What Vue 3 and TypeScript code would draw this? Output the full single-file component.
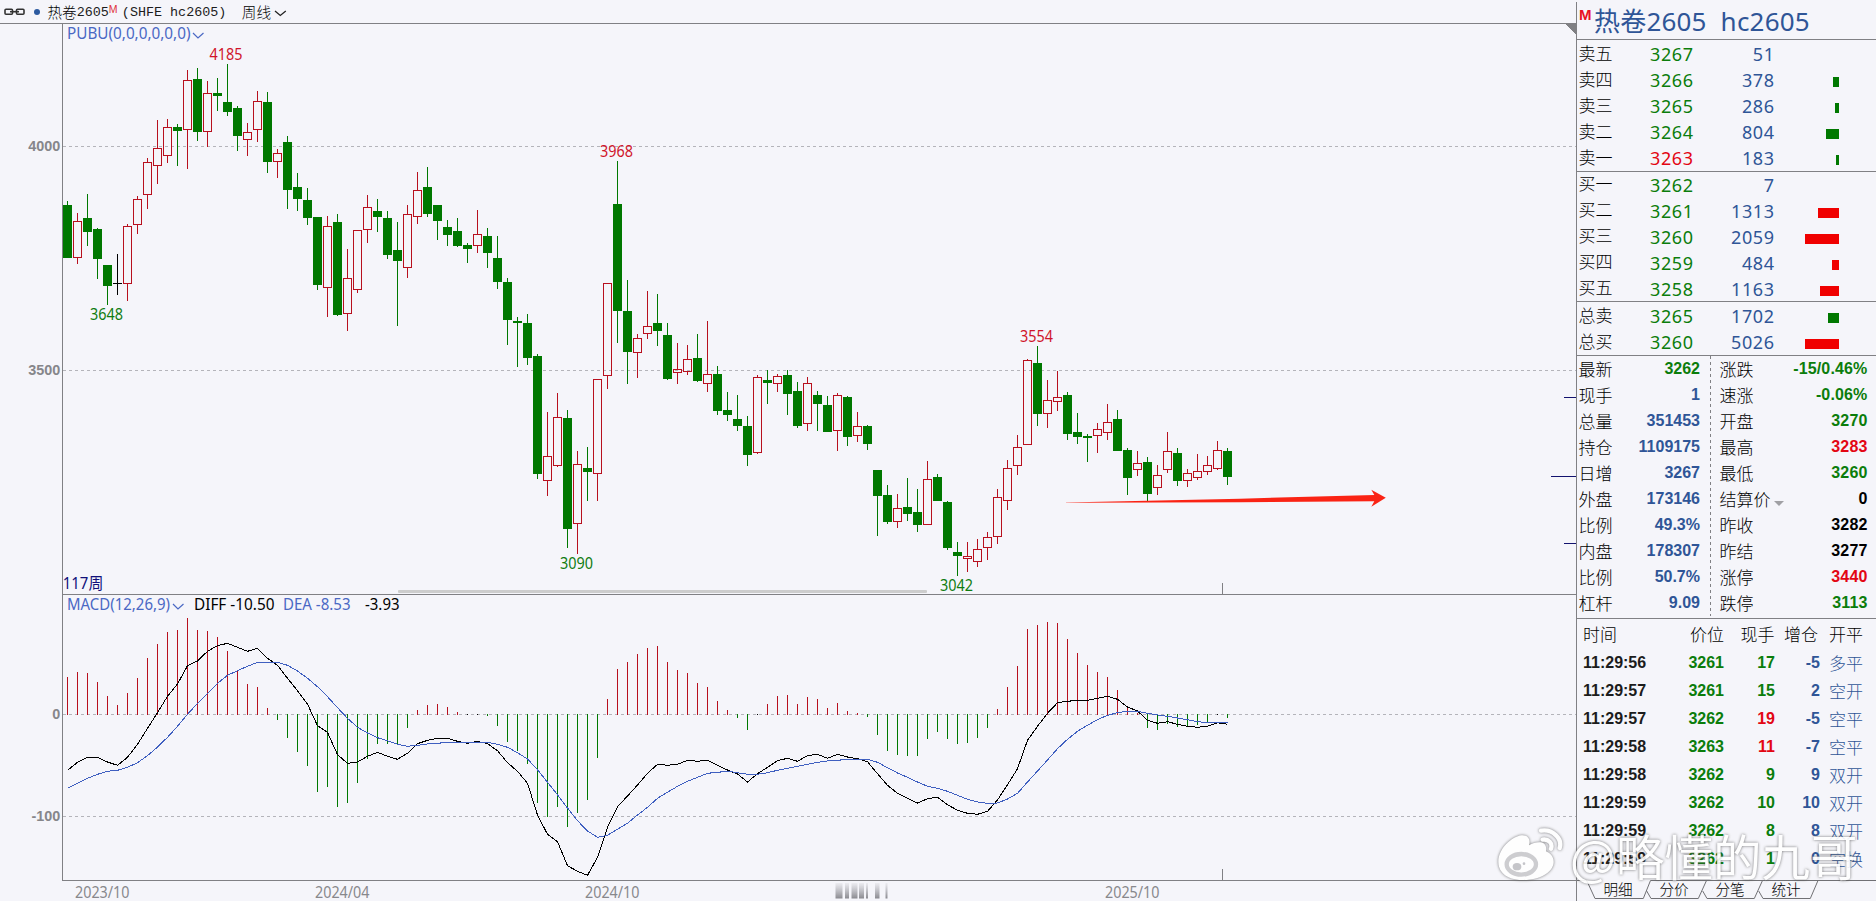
<script setup lang="ts">
type Tone = 'up' | 'down' | 'info' | 'plain'
type Candle = [string, number, number, number, number]

/* kind, high, body top, body bottom, low (chart pixels) */
const candles: Candle[] = [
  ['g', 201, 205, 258, 258], ['r', 213, 221, 258, 264], ['g', 194, 218, 232, 246], ['g', 228, 229, 259, 279],
  ['g', 265, 265, 286, 305], ['k', 254, 283, 284, 295], ['r', 224, 226, 284, 301], ['r', 196, 199, 225, 234],
  ['r', 158, 162, 195, 209], ['r', 120, 148, 166, 184], ['r', 119, 127, 156, 163], ['g', 124, 127, 131, 166],
  ['r', 70, 80, 130, 169], ['g', 68, 79, 132, 141], ['r', 81, 93, 132, 147], ['g', 78, 93, 96, 111],
  ['g', 64, 102, 112, 116], ['g', 106, 108, 136, 151], ['r', 123, 132, 140, 156], ['r', 91, 101, 130, 142],
  ['g', 92, 102, 162, 173], ['r', 149, 153, 162, 178], ['g', 136, 142, 190, 209], ['g', 173, 187, 199, 211],
  ['g', 188, 200, 218, 225], ['g', 217, 217, 285, 290], ['r', 216, 226, 288, 317], ['g', 214, 222, 315, 316],
  ['r', 249, 278, 314, 331], ['r', 230, 230, 290, 293], ['r', 195, 207, 230, 243], ['g', 199, 211, 217, 232],
  ['g', 211, 218, 255, 259], ['g', 222, 250, 261, 326], ['r', 205, 214, 268, 278], ['r', 172, 190, 217, 224],
  ['g', 167, 187, 214, 217], ['g', 205, 205, 221, 240], ['g', 220, 227, 235, 246], ['g', 218, 231, 246, 247],
  ['g', 243, 245, 249, 263], ['r', 210, 234, 246, 253], ['g', 228, 236, 253, 268], ['g', 236, 258, 282, 289],
  ['g', 278, 282, 320, 345], ['g', 317, 321, 323, 367], ['g', 314, 323, 358, 365], ['g', 354, 356, 474, 479],
  ['r', 412, 456, 481, 496], ['r', 393, 417, 466, 467], ['g', 410, 418, 529, 548], ['r', 451, 464, 524, 554],
  ['g', 447, 468, 472, 501], ['r', 379, 379, 474, 501], ['r', 283, 283, 376, 389], ['g', 161, 204, 311, 343],
  ['g', 280, 311, 352, 384], ['r', 334, 338, 353, 378], ['r', 291, 326, 334, 339], ['g', 294, 323, 331, 346],
  ['g', 323, 335, 379, 380], ['r', 343, 369, 373, 384], ['r', 345, 359, 372, 375], ['g', 334, 358, 381, 382],
  ['r', 321, 374, 384, 392], ['g', 366, 374, 411, 415], ['g', 392, 410, 415, 421], ['g', 395, 419, 426, 431],
  ['g', 416, 426, 455, 466], ['r', 375, 377, 453, 454], ['g', 370, 380, 383, 404], ['r', 374, 376, 384, 392],
  ['g', 370, 375, 394, 415], ['g', 382, 391, 426, 428], ['r', 377, 383, 424, 431], ['g', 391, 395, 404, 431],
  ['g', 396, 405, 432, 432], ['r', 393, 395, 431, 451], ['g', 396, 397, 437, 446], ['r', 412, 426, 436, 442],
  ['g', 425, 426, 444, 450], ['g', 470, 470, 496, 536], ['g', 485, 495, 522, 524], ['r', 494, 508, 522, 528],
  ['g', 478, 507, 514, 521], ['g', 489, 512, 525, 532], ['r', 461, 479, 525, 525], ['g', 474, 477, 501, 501],
  ['g', 501, 502, 548, 550], ['g', 542, 552, 556, 576], ['r', 542, 556, 559, 572], ['r', 539, 549, 562, 567],
  ['r', 532, 537, 548, 560], ['r', 489, 497, 537, 544], ['r', 460, 468, 501, 510], ['r', 435, 447, 466, 475],
  ['r', 359, 360, 445, 445], ['g', 346, 363, 414, 426], ['r', 380, 400, 414, 428], ['r', 371, 397, 402, 411],
  ['g', 392, 395, 434, 440], ['g', 413, 432, 437, 444], ['g', 434, 436, 438, 462], ['r', 423, 429, 436, 453],
  ['r', 404, 422, 433, 440], ['g', 410, 419, 451, 451], ['g', 448, 450, 478, 495], ['r', 451, 463, 470, 476],
  ['g', 457, 462, 494, 502], ['r', 465, 475, 488, 495], ['r', 432, 451, 470, 473], ['g', 448, 453, 481, 486],
  ['r', 469, 473, 481, 487], ['r', 454, 471, 478, 480], ['r', 456, 465, 472, 475], ['r', 441, 450, 469, 470],
  ['g', 448, 451, 477, 485],
]

/* MACD series are stored in thirds of a pixel below y = 570 */
const hist = [
  321, 306, 309, 336, 378, 405, 369, 324, 264, 222, 186, 180, 144, 180, 183, 201, 243, 303, 342, 351, 414, 449, 503, 545,
  587, 665, 650, 710, 698, 638, 566, 521, 521, 521, 473, 420, 405, 402, 411, 426, 434, 434, 437, 467, 515, 542, 581, 698,
  740, 710, 770, 728, 689, 563, 387, 297, 276, 252, 234, 228, 276, 300, 309, 339, 351, 393, 420, 443, 479, 434, 402, 378,
  375, 402, 381, 387, 414, 399, 423, 430, 440, 494, 542, 554, 557, 557, 506, 485, 506, 521, 518, 503, 473, 417, 351, 288,
  177, 165, 156, 159, 207, 249, 285, 306, 321, 360, 411, 429, 473, 479, 461, 470, 467, 464, 458, 434, 443,
]
const diff = [
  601, 577, 562, 562, 576, 586, 562, 523, 475, 428, 379, 342, 287, 273, 244, 227, 220, 232, 244, 235, 265, 286, 325, 362,
  402, 467, 487, 554, 580, 576, 559, 547, 559, 568, 550, 521, 511, 505, 505, 514, 520, 514, 521, 542, 578, 604, 640, 735,
  793, 815, 887, 904, 916, 862, 772, 710, 678, 645, 610, 583, 586, 583, 571, 574, 571, 586, 600, 612, 636, 611, 592, 572,
  565, 574, 557, 553, 565, 553, 561, 566, 575, 611, 646, 670, 685, 699, 686, 682, 704, 721, 730, 733, 724, 690, 644, 596,
  511, 469, 430, 398, 394, 391, 391, 385, 379, 388, 411, 423, 451, 460, 455, 463, 469, 472, 469, 458, 463,
]
const dea = [
  655, 640, 625, 613, 604, 601, 592, 578, 557, 531, 502, 469, 433, 400, 370, 340, 316, 302, 289, 277, 277, 277, 286, 303,
  325, 350, 380, 413, 445, 472, 489, 503, 512, 523, 529, 526, 522, 520, 517, 517, 517, 517, 517, 523, 532, 548, 567, 599,
  637, 674, 714, 752, 783, 802, 796, 778, 760, 735, 712, 685, 667, 649, 634, 622, 610, 607, 604, 608, 613, 613, 608, 601,
  595, 589, 583, 577, 573, 571, 568, 568, 568, 577, 593, 609, 622, 636, 649, 655, 664, 676, 688, 696, 700, 699, 687, 670,
  636, 603, 570, 536, 508, 484, 466, 449, 436, 428, 424, 424, 430, 435, 439, 444, 449, 455, 458, 458, 458,
]
const cx = (i: number) => 67 + i * 10
const macdY = (v: number) => 570 + v / 3
const points = (s: number[]) => s.map((v, i) => `${cx(i) + 0.5},${macdY(v).toFixed(1)}`).join(' ')
const bars = hist.map((v, i) => {
  const end = Math.round(macdY(v))
  return v < 433
    ? { x: cx(i), y: end, h: 715 - end, kind: 'r' }
    : { x: cx(i), y: 714, h: Math.max(1, end - 714), kind: v < 436 ? 'k' : 'g' }
})

const peaks = [
  { t: '4185', x: 209.5, y: 60, c: 'r' }, { t: '3648', x: 90, y: 320, c: 'g' },
  { t: '3968', x: 600, y: 157, c: 'r' }, { t: '3090', x: 560, y: 569, c: 'g' },
  { t: '3554', x: 1020, y: 342, c: 'r' }, { t: '3042', x: 940, y: 591, c: 'g' },
]
const dates = [
  { t: '2023/10', x: 75 }, { t: '2024/04', x: 315 }, { t: '2024/10', x: 585 }, { t: '2025/10', x: 1105 },
]
const smudges = [
  [835.5, 7], [845, 4], [851.5, 6], [859, 5], [866, 2], [875, 4.5], [885.5, 2],
]

interface Quote { label: string; price: number; tone: Tone; vol: number; bar: number }
const q = (label: string, price: number, tone: Tone, vol: number, bar: number): Quote => ({ label, price, tone, vol, bar })
const books: { side: string; rows: Quote[] }[] = [
  { side: 'sell', rows: [q('卖五', 3267, 'down', 51, 0), q('卖四', 3266, 'down', 378, 6), q('卖三', 3265, 'down', 286, 4), q('卖二', 3264, 'down', 804, 13), q('卖一', 3263, 'up', 183, 3)] },
  { side: 'buy', rows: [q('买一', 3262, 'down', 7, 0), q('买二', 3261, 'down', 1313, 21), q('买三', 3260, 'down', 2059, 34), q('买四', 3259, 'down', 484, 7), q('买五', 3258, 'down', 1163, 19)] },
  { side: 'sum', rows: [q('总卖', 3265, 'down', 1702, 11), q('总买', 3260, 'down', 5026, 34)] },
]
const barTone = (side: string, i: number) => (side === 'sell' || (side === 'sum' && i === 0) ? 'fill-down' : 'fill-up')

const stats: [string, string, Tone, string, string, Tone][] = [
  ['最新', '3262', 'down', '涨跌', '-15/0.46%', 'down'],
  ['现手', '1', 'info', '速涨', '-0.06%', 'down'],
  ['总量', '351453', 'info', '开盘', '3270', 'down'],
  ['持仓', '1109175', 'info', '最高', '3283', 'up'],
  ['日增', '3267', 'info', '最低', '3260', 'down'],
  ['外盘', '173146', 'info', '结算价', '0', 'plain'],
  ['比例', '49.3%', 'info', '昨收', '3282', 'plain'],
  ['内盘', '178307', 'info', '昨结', '3277', 'plain'],
  ['比例', '50.7%', 'info', '涨停', '3440', 'up'],
  ['杠杆', '9.09', 'info', '跌停', '3113', 'down'],
]
const ticks: [string, string, string, Tone, string, string][] = [
  ['11:29:56', '3261', '17', 'down', '-5', '多平'],
  ['11:29:57', '3261', '15', 'down', '2', '空开'],
  ['11:29:57', '3262', '19', 'up', '-5', '空平'],
  ['11:29:58', '3263', '11', 'up', '-7', '空平'],
  ['11:29:58', '3262', '9', 'down', '9', '双开'],
  ['11:29:59', '3262', '10', 'down', '10', '双开'],
  ['11:29:59', '3262', '8', 'down', '8', '双开'],
  ['11:29:59', '3262', '1', 'down', '0', '空换'],
]
const tabs = [{ t: '明细', x: 26.5 }, { t: '分价', x: 82.5 }, { t: '分笔', x: 138.5 }, { t: '统计', x: 194.5 }]
</script>

<template>
  <div class="app">
    <section class="main">
      <header class="topbar">
        <svg class="chain" width="22" height="8" viewBox="0 0 22 8">
          <rect x="1" y="1.2" width="7.5" height="5" rx="1" />
          <rect x="12.5" y="1.2" width="7.5" height="5" rx="1" />
          <path d="M6 3.7h9" />
        </svg>
        <i class="dot"></i>
        <span class="cjk">热卷</span><span class="mono">2605</span><sup>M</sup><span class="mono code">(SHFE hc2605)</span>
        <span class="cjk period">周线</span>
        <svg class="chev" width="13" height="7" viewBox="0 0 13 7"><path d="M1 1l5.3 4.4L11.8 1" /></svg>
      </header>

      <svg class="chart" width="1576" height="878" viewBox="0 23 1576 878">
        <g class="grid">
          <line v-for="y in [146, 370, 714, 816]" :key="y" x1="63" :y1="y + 0.5" x2="1576" :y2="y + 0.5" />
        </g>
        <g class="frame">
          <path d="M0 23.5H1576M62.5 23V880.5M62 594.5H1576M62 880.5H1576M1222.5 583V594M1222.5 869V880" />
          <path class="corner" d="M1565 24H1576V35Z" />
        </g>
        <rect class="scroll" x="398" y="590" width="529" height="3" rx="1" />
        <path class="marks" d="M1564 397.5H1576M1551 476.5H1576M1564 543.5H1576" />

        <g class="candles">
          <g v-for="(c, i) in candles" :key="i" :class="c[0]">
            <template v-if="c[0] === 'r'">
              <rect class="ink" :x="cx(i)" :y="c[1]" width="1" :height="c[2] - c[1]" />
              <rect class="ink" :x="cx(i)" :y="c[3]" width="1" :height="c[4] - c[3]" />
              <rect class="hollow" :x="cx(i) - 3.5" :y="c[2] + 0.5" width="8" :height="c[3] - c[2] - 1" />
            </template>
            <template v-else>
              <rect class="ink" :x="cx(i)" :y="c[1]" width="1" :height="c[4] - c[1]" />
              <rect class="ink" :x="cx(i) - 4" :y="c[2]" width="9" :height="c[3] - c[2]" />
            </template>
          </g>
          <g v-for="(b, i) in bars" :key="'m' + i" :class="b.kind">
            <rect class="ink" :x="b.x" :y="b.y" width="1" :height="b.h" />
          </g>
          <polyline class="diff" :points="points(diff)" />
          <polyline class="dea" :points="points(dea)" />
        </g>

        <path class="arrow" d="M1066 502.4L1240 498.7L1374.3 495L1371.3 489.7L1385.8 497.7L1371.3 506.8L1374.3 501.2L1240 502.2L1066 502.8Z" />

        <g class="label">
          <text v-for="p in peaks" :key="p.t" :class="p.c" :x="p.x" :y="p.y" textLength="33" lengthAdjust="spacingAndGlyphs">{{ p.t }}</text>
          <text class="blue" x="67" y="39.3" textLength="123.5" lengthAdjust="spacingAndGlyphs">PUBU(0,0,0,0,0,0)</text>
          <text class="navy" x="62.8" y="589.3" textLength="40.5" lengthAdjust="spacingAndGlyphs">117周</text>
          <text class="blue" x="67" y="610" textLength="103" lengthAdjust="spacingAndGlyphs">MACD(12,26,9)</text>
          <text class="black" x="194" y="610" textLength="80.5" lengthAdjust="spacingAndGlyphs">DIFF -10.50</text>
          <text class="blue" x="283" y="610" textLength="67.5" lengthAdjust="spacingAndGlyphs">DEA -8.53</text>
          <text class="black" x="365" y="610" textLength="34.5" lengthAdjust="spacingAndGlyphs">-3.93</text>
          <text v-for="d in dates" :key="d.t" class="gray" :x="d.x" y="898" textLength="54.5" lengthAdjust="spacingAndGlyphs">{{ d.t }}</text>
        </g>
        <path class="drop" d="M193 33l5 5 5.5-5M173 604l5 5 5.5-5" />
        <g class="axis">
          <text x="60.3" y="151">4000</text>
          <text x="60.3" y="375">3500</text>
          <text x="60.3" y="719">0</text>
          <text x="60.3" y="821">-100</text>
        </g>
        <defs>
          <linearGradient id="fade" x1="0" y1="0" x2="0" y2="1">
            <stop offset="0" stop-color="#8a8a90" stop-opacity="0.08" />
            <stop offset="1" stop-color="#77777d" stop-opacity="0.85" />
          </linearGradient>
        </defs>
        <g class="smudge">
          <rect v-for="(s, i) in smudges" :key="'s' + i" fill="url(#fade)" :x="s[0]" y="883" :width="s[1]" height="15.5" />
        </g>
      </svg>
    </section>

    <aside class="panel">
      <h1><b>M</b><span>热卷2605&nbsp; hc2605</span></h1>
      <div v-for="bk in books" :key="bk.side" class="book" :class="bk.side">
        <div v-for="(r, i) in bk.rows" :key="r.label" class="quote">
          <span class="name">{{ r.label }}</span>
          <span class="num" :class="r.tone">{{ r.price }}</span>
          <span class="num info">{{ r.vol }}</span>
          <span class="track"><i :class="barTone(bk.side, i)" :style="{ width: r.bar + 'px' }"></i></span>
        </div>
      </div>
      <div class="stats">
        <div v-for="(s, i) in stats" :key="i" class="stat">
          <span class="name">{{ s[0] }}</span>
          <b :class="s[2]">{{ s[1] }}</b>
          <span class="name second">{{ s[3] }}<i v-if="s[3] === '结算价'" class="tri"></i></span>
          <b :class="s[5]">{{ s[4] }}</b>
        </div>
      </div>
      <div class="ticks">
        <div class="tick head">
          <span>时间</span><span>价位</span><span>现手</span><span>增仓</span><span>开平</span>
        </div>
        <div v-for="(t, i) in ticks" :key="i" class="tick">
          <b class="time">{{ t[0] }}</b><b class="down">{{ t[1] }}</b><b :class="t[3]">{{ t[2] }}</b><b class="info">{{ t[4] }}</b><span class="info">{{ t[5] }}</span>
        </div>
      </div>
      <svg class="tabs" width="299" height="21" viewBox="0 0 299 21">
        <path d="M0 .5H9.7L18 18.5H66.3L73.5 .5H299M69.7 11L74 18.5H121.3L129.5 .5M125.7 11L130 18.5H177.3L185.5 .5M181.7 11L186 18.5H233.3L241 .5" />
        <text v-for="t in tabs" :key="t.t" :x="t.x" y="14.5">{{ t.t }}</text>
      </svg>
    </aside>

    <div class="watermark">
      <svg width="68" height="58" viewBox="45 645 204 174">
        <path class="w" d="M57 770C45 725 92 680 125 676C146 675 152 690 147 706C170 692 204 690 198 724C230 738 226 772 202 789C165 818 72 822 57 770Z" />
        <ellipse class="ring" cx="124" cy="763" rx="44" ry="31" />
        <ellipse class="pupil" cx="111" cy="770" rx="13" ry="11" />
        <circle class="pupil" cx="132" cy="761" r="4" />
        <path class="wave" d="M183 662C218 656 248 686 239 714M188 689C205 686 219 700 213 716" />
      </svg>
      <span>@略懂的九哥</span>
    </div>
  </div>
</template>

<style>
html,
body {
  margin: 0;
  background: #f5f5fa;
  overflow: hidden;
}
</style>

<style scoped>
.app {
  position: relative;
  display: grid;
  grid-template-columns: 1576px 300px;
  width: 1876px;
  height: 901px;
  overflow: hidden;
  background: #f5f5fa;
  font-family: 'Noto Sans', 'Noto Sans CJK SC', sans-serif;
  color: #1c1c1c;
}
.main {
  display: flex;
  flex-direction: column;
}
.topbar {
  display: flex;
  align-items: center;
  height: 23px;
  padding-left: 4px;
  box-sizing: border-box;
  white-space: pre;
}
.chain {
  margin-top: 1px;
}
.chain rect,
.chain path {
  fill: none;
  stroke: #333;
  stroke-width: 1.6;
}
.dot {
  width: 6px;
  height: 6px;
  margin: 1px 7.5px 0 8px;
  border-radius: 50%;
  background: #2c5aa0;
}
.cjk {
  font: 300 14.6px/22px 'Noto Sans CJK SC', sans-serif;
  color: #000;
}
.mono {
  font: 13.4px/22px 'Liberation Mono', monospace;
  padding-top: 2px;
}
.topbar sup {
  width: 11px;
  margin-top: -6px;
  font: 10.5px/12px 'Liberation Sans', sans-serif;
  color: #e0303c;
  vertical-align: baseline;
}
.code {
  margin-left: 2px;
}
.period {
  margin-left: 15.5px;
}
.chev {
  margin: 3px 0 0 2.5px;
}
.chev path {
  fill: none;
  stroke: #222;
  stroke-width: 1.3;
}
.chart {
  display: block;
}
.grid line {
  stroke: #b4b4ba;
  stroke-dasharray: 3 3;
  shape-rendering: crispEdges;
}
.frame path {
  fill: none;
  stroke: #808084;
  shape-rendering: crispEdges;
}
.frame .corner {
  fill: #808084;
  stroke: none;
}
.scroll {
  fill: #cdcdcd;
}
.smudge {
  filter: blur(0.6px);
}
.marks {
  stroke: #12126e;
  shape-rendering: crispEdges;
}
.candles {
  shape-rendering: crispEdges;
}
.r .ink {
  fill: #b8101e;
}
.r .hollow {
  fill: none;
  stroke: #b8101e;
}
.g .ink {
  fill: #007800;
}
.k .ink {
  fill: #000;
}
.diff,
.dea {
  fill: none;
  stroke: #000;
  stroke-width: 1;
}
.dea {
  stroke: #3f5fc0;
}
.arrow {
  fill: #fa2314;
}
.label text {
  font-size: 16.2px;
}
.label .r {
  fill: #d0142a;
}
.label .g {
  fill: #107c10;
}
.blue {
  fill: #4a68c4;
}
.navy {
  fill: #10107a;
}
.black {
  fill: #000;
}
.gray {
  fill: #88888c;
}
.drop {
  fill: none;
  stroke: #4a68c4;
  stroke-width: 1.2;
}
.axis text {
  font: bold 14.4px 'Liberation Sans', sans-serif;
  fill: #86868a;
  text-anchor: end;
}

.panel {
  display: flex;
  flex-direction: column;
  margin-top: 2px;
  border-left: 1px solid #808084;
  background: #f5f5fa;
}
h1 {
  display: flex;
  align-items: center;
  height: 37px;
  margin: 0;
  border-bottom: 1px solid #808084;
  font-size: 26px;
  line-height: 37px;
  color: #2f5597;
  white-space: pre;
}
h1 b {
  width: 15px;
  margin: -13px 0 0 2px;
  font: bold 15px/15px 'Liberation Sans', sans-serif;
  color: #e81123;
}
h1 span {
  padding-top: 1px;
  font-weight: 400;
  letter-spacing: 0.2px;
}
.book {
  border-bottom: 1px solid #808084;
}
.sell {
  padding-top: 1px;
}
.buy {
  height: 129px;
}
.buy .quote {
  position: relative;
  top: -0.5px;
}
.sum {
  padding-top: 1px;
  height: 52px;
}
.quote {
  display: grid;
  grid-template-columns: 60px 56.5px 81px 64.5px;
  align-items: center;
  height: 26px;
}
.name,
.tick span {
  font: 300 17px/24px 'Noto Sans CJK SC', sans-serif;
}
.name {
  padding-left: 1.5px;
  margin-top: -3px;
  color: #000;
}
.head span {
  color: #000;
}
.stat .name {
  margin-top: -1px;
}
.num {
  font-size: 18px;
  line-height: 26px;
  letter-spacing: 0.55px;
  text-align: right;
}
.track {
  display: flex;
  justify-content: flex-end;
  padding-top: 4px;
}
.track i {
  height: 10px;
}
.up {
  color: #e30613;
}
.down {
  color: #0b7d0b;
}
.info {
  color: #2f5597;
}
.plain {
  color: #000;
}
.fill-up {
  background: #f00000;
}
.fill-down {
  background: #007800;
}
.stats {
  height: 262px;
  border-bottom: 1px solid #808084;
  background: repeating-linear-gradient(#808084 0 3px, transparent 3px 6px) 133px 0 / 1px 260px no-repeat;
}
.stat {
  display: grid;
  grid-template-columns: 50px 73px 87.5px 80px;
  align-items: center;
  height: 26px;
}
.stat b,
.tick b {
  font: bold 16px/24px 'Liberation Sans', sans-serif;
  text-align: right;
  white-space: nowrap;
}
.stat b:last-child {
  letter-spacing: 0.15px;
}
.second {
  padding-left: 19.5px;
  white-space: nowrap;
}
.tri {
  display: inline-block;
  margin-left: 3px;
  border: 5px solid transparent;
  border-top-color: #a0a0a4;
  border-bottom: 0;
}
.ticks {
  flex: 1;
}
.tick {
  display: grid;
  grid-template-columns: 66px 75px 51px 45px 43px;
  height: 28px;
  padding-left: 6px;
  align-items: center;
}
.tick span:last-child {
  text-align: right;
}
.tick b.time {
  text-align: left;
}
.head {
  grid-template-columns: 66px 75px 50.5px 43.5px 45px;
  height: 29px;
  padding-bottom: 0.5px;
}
.head span {
  text-align: right;
}
.head span:first-child {
  text-align: left;
}
.tabs {
  display: block;
  height: 21px;
}
.tabs path {
  fill: none;
  stroke: #707074;
}
.tabs text {
  font: 300 14.6px 'Noto Sans CJK SC', sans-serif;
  fill: #000;
}

.watermark {
  position: absolute;
  left: 1495px;
  top: 825px;
  display: flex;
  opacity: 0.9;
  filter: drop-shadow(0 0 1.5px rgba(80, 80, 80, 0.85));
}
.watermark span {
  margin-left: 7px;
  font: 400 48.5px/60px 'Noto Sans CJK SC', sans-serif;
  color: #fff;
  white-space: nowrap;
}
.w {
  fill: #fff;
}
.ring {
  fill: #fff;
  stroke: #c9c9cc;
  stroke-width: 13;
}
.pupil {
  fill: #c0c0c4;
}
.wave {
  fill: none;
  stroke: #fff;
  stroke-width: 13;
  stroke-linecap: round;
}
</style>
